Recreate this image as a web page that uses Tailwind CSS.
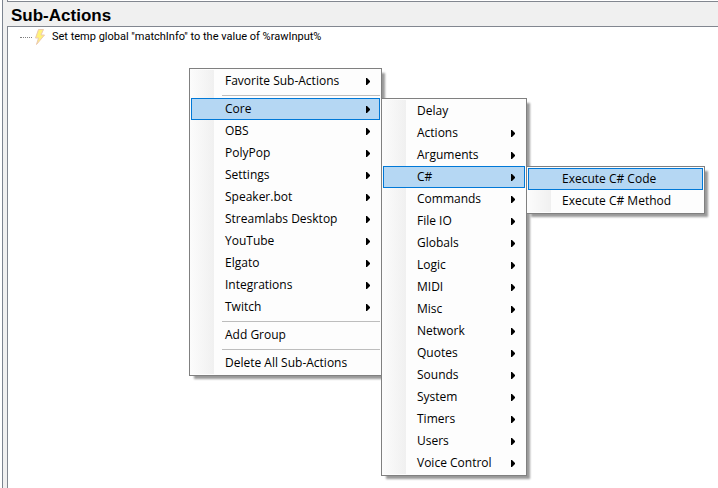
<!DOCTYPE html>
<html lang="en">
<head>
<meta charset="utf-8">
<title>Sub-Actions</title>
<script src="https://cdn.jsdelivr.net/npm/@tailwindcss/browser@4"></script>
</head>
<body class="h-screen overflow-hidden bg-white text-black">
<main class="flex h-full flex-col">
  <div class="flex min-h-0 flex-1">
    <div class="w-[3px] shrink-0 border-r border-[#7c8490] bg-white"></div>
    <section class="flex min-w-0 flex-1 flex-col bg-[#f0f0f0] pl-1">
      <div class="h-0.5 shrink-0 border-b border-l border-[#828790] bg-white"></div>
      <h1 class="h-6 shrink-0 pl-1 font-['Liberation_Sans',Arial,sans-serif] text-[17px] leading-7 font-bold">Sub-Actions</h1>
      <ul class="flex-1 border-t border-l border-[#828790] bg-white pl-3">
        <li class="flex h-5 items-center">
          <span class="w-3 border-t border-dotted border-[#808080]"></span>
          <svg class="ml-0.5 h-4 w-3" viewBox="0 0 12 16" aria-hidden="true"><path d="M4.500 .5h5L7 6h3.500L2.500 15.500l2-6.500H1.500z" fill="#fff27a" stroke="#ecc9b0" stroke-width="1"/></svg>
          <span class="ml-1.5 font-['Roboto','Liberation_Sans',sans-serif] text-[11px] whitespace-nowrap">Set temp global "matchInfo" to the value of %rawInput%</span>
        </li>
      </ul>
    </section>
  </div>
</main>

<div id="menus" class="font-['Open_Sans','Noto_Sans',sans-serif] text-[12px] leading-5"></div>

<template id="row">
  <button type="button" role="menuitem" class="flex h-[22px] w-full items-center border border-transparent pr-[9px] pl-[33px] text-left whitespace-nowrap aria-expanded:border-[#0078d7] aria-expanded:bg-[#b5d7f3]">
    <span class="flex-1"></span>
    <svg class="h-[7px] w-1" viewBox="0 0 4 7" aria-hidden="true"><path d="M0 0h1l3 3v1L1 7H0z" fill="#000"/></svg>
  </button>
</template>

<script>
const menus = [
  { at: "left-[189px] top-[68px] w-[193px]", label: "Sub-actions menu", open: "Core",
    items: ["Favorite Sub-Actions>", "-", "Core>", "OBS>", "PolyPop>", "Settings>", "Speaker.bot>", "Streamlabs Desktop>", "YouTube>", "Elgato>", "Integrations>", "Twitch>", "-", "Add Group", "-", "Delete All Sub-Actions"] },
  { at: "left-[381px] top-[98px] w-[146px]", label: "Core", open: "C#",
    items: ["Delay", "Actions>", "Arguments>", "C#>", "Commands>", "File IO>", "Globals>", "Logic>", "MIDI>", "Misc>", "Network>", "Quotes>", "Sounds>", "System>", "Timers>", "Users>", "Voice Control>"] },
  { at: "left-[526px] top-[166px] w-[179px]", label: "C#", open: "Execute C# Code",
    items: ["Execute C# Code", "Execute C# Method"] }
];
const row = document.getElementById("row");
for (const menu of menus) {
  const box = document.createElement("div");
  box.className = "absolute border border-[#808080] bg-[#fdfdfd] p-px shadow-[4px_4px_2px_-1px_rgba(0,0,0,0.4)] " + menu.at;
  box.setAttribute("role", "menu");
  box.setAttribute("aria-label", menu.label);
  const list = document.createElement("div");
  list.className = "-ml-px bg-linear-to-r from-[#fcfcfc] to-[#f0f0f0] bg-[length:24px_100%] bg-no-repeat pl-px";
  for (const item of menu.items) {
    if (item === "-") {
      const rule = document.createElement("div");
      rule.className = "ml-[31px] h-1.5 pt-[3px]";
      rule.setAttribute("role", "separator");
      rule.innerHTML = '<div class="h-px bg-[#bdbdbd]"></div>';
      list.append(rule);
      continue;
    }
    const node = row.content.firstElementChild.cloneNode(true);
    const text = item.replace(">", "");
    node.querySelector("span").textContent = text;
    if (!item.endsWith(">")) node.querySelector("svg").remove();
    if (text === menu.open) node.setAttribute("aria-expanded", "true");
    list.append(node);
  }
  box.append(list);
  document.getElementById("menus").append(box);
}
</script>
</body>
</html>
